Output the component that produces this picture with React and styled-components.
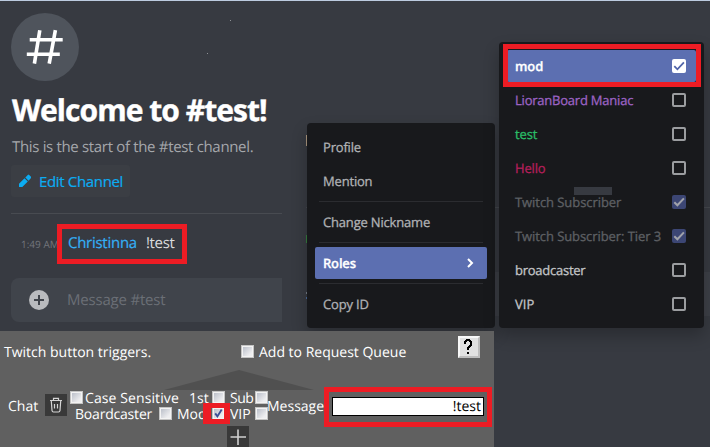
import React from 'react';
import styled, { createGlobalStyle } from 'styled-components';

const Global = createGlobalStyle`
  * { box-sizing: border-box; }
  body { margin: 0; background: #373a41; font-family: "Open Sans", "Noto Sans", sans-serif; text-rendering: geometricPrecision; }
`;

const Screen = styled.main`
  position: relative;
  width: 710px;
  height: 447px;
  overflow: hidden;
  background: #373a41;
  border-top: 1px solid #bccbe0;
  white-space: nowrap;
`;

const Highlight = styled.span`
  position: absolute;
  left: ${p => p.$x}px;
  top: ${p => p.$y}px;
  width: ${p => p.$w}px;
  height: ${p => p.$h}px;
  border-style: solid;
  border-color: #ed1c24;
  border-width: ${p => p.$border || '5px'};
  z-index: 5;
  pointer-events: none;
`;

/* ---------- channel ---------- */
const Channel = styled.section`
  display: flex;
  flex-direction: column;
  align-items: flex-start;
  width: 282px;
  height: 330px;
  padding: 12px 0 0 11px;
`;

const HashBadge = styled.div`
  display: flex;
  width: 68px;
  height: 68px;
  border-radius: 50%;
  background: #4f545c;
`;

const Title = styled.h1`
  margin: 9px 0 0 1px;
  font-size: 30px;
  line-height: 40px;
  font-weight: 700;
  letter-spacing: -0.95px;
  color: #fff;
  -webkit-text-stroke: 0.4px #fff;
`;

const Subtitle = styled.p`
  margin: 6px 0 0 1px;
  font-size: 15px;
  line-height: 22px;
  letter-spacing: -0.33px;
  color: #a5a7ab;
`;

const EditButton = styled.button`
  display: flex;
  align-items: center;
  gap: 8px;
  width: 119px;
  height: 32px;
  margin-top: 7px;
  padding: 0 0 1px 8px;
  border: 0;
  border-radius: 3px;
  background: #3b3e44;
  color: #0cacf2;
  font: 500 15px/30px "Open Sans", sans-serif;
  letter-spacing: -0.34px;
  -webkit-text-stroke: 0.2px #0cacf2;
`;

const Divider = styled.hr`
  width: 271px;
  height: 1px;
  margin: 16px 0 0;
  border: 0;
  background: #484b51;
`;

const MessageLine = styled.div`
  display: flex;
  align-items: baseline;
  height: 40px;
  margin-top: 10px;
  padding-left: 10px;
  line-height: 38px;
`;

const Time = styled.time`
  width: 47px;
  font-size: 10px;
  color: #72757b;
`;

const Author = styled.span`
  width: 78px;
  font-size: 15px;
  font-weight: 500;
  letter-spacing: -0.27px;
  color: #34aff5;
  -webkit-text-stroke: 0.2px #34aff5;
`;

const MessageText = styled.span`
  font-size: 15px;
  letter-spacing: -0.35px;
  color: #dcddde;
`;

const Composer = styled.div`
  display: flex;
  align-items: center;
  gap: 18px;
  width: 271px;
  height: 44px;
  margin-top: 14px;
  padding-left: 18px;
  border-radius: 8px 0 0 8px;
  background: #40444b;
  color: #6b6f76;
  font-size: 15px;
  line-height: 42px;
  letter-spacing: -0.2px;
`;

/* Pieces of the window that stay visible around the menus. */
const BackDivider = styled.span`
  position: absolute;
  left: 306px;
  top: 206px;
  width: 404px;
  height: 1px;
  background: #44474d;
`;
const BackComposer = styled.span`
  position: absolute;
  left: 490px;
  top: 271px;
  width: 220px;
  height: 44px;
  background: #3d4047;
`;
const Sliver = styled.span`
  position: absolute;
  left: 306px;
  top: ${p => p.$y}px;
  width: 1px;
  height: ${p => p.$h}px;
  background: ${p => p.$color};
`;
const Speck = styled.span`
  position: absolute;
  left: ${p => p.$x}px;
  top: ${p => p.$y}px;
  width: 1px;
  height: 1px;
  background: #8e9195;
`;

/* ---------- menus ---------- */
const Menu = styled.nav`
  position: absolute;
  left: ${p => p.$x}px;
  top: ${p => p.$y}px;
  width: ${p => p.$w}px;
  height: ${p => p.$h}px;
  padding: 8px;
  display: flex;
  flex-direction: column;
  gap: 2px;
  border-radius: 4px;
  background: #18191c;
  box-shadow: 0 8px 16px rgba(0, 0, 0, 0.24);
`;

const MenuItem = styled.div`
  display: flex;
  align-items: center;
  justify-content: space-between;
  flex: none;
  height: 32px;
  padding: 0 ${p => (p.$role ? 10 : 8)}px 0 8px;
  border-radius: 2px;
  background: ${p => (p.$active ? '#5c6fb1' : 'transparent')};
  color: ${p => p.$color || '#b0b2b5'};
  font-size: 13px;
  line-height: 32px;
  font-weight: ${p => (p.$active ? 600 : 500)};
  letter-spacing: ${p => p.$ls || '-0.18px'};
  -webkit-text-stroke: 0.3px currentColor;
`;

const MenuRule = styled.hr`
  flex: none;
  width: 164px;
  height: 1px;
  margin: 2px 4px;
  border: 0;
  background: #2b2c30;
`;

const Patch = styled.span`
  position: absolute;
  left: 75px;
  top: 145px;
  width: 38px;
  height: 8px;
  background: #373a41;
`;

const RoleBox = styled.span`
  display: flex;
  width: 14px;
  height: 14px;
  border-radius: 2px;
  border: ${p => (p.$state ? '0' : '2px solid #9b9da0')};
  background: ${p => (p.$state === 'on' ? '#fff' : p.$state === 'locked' ? '#3c4674' : 'transparent')};
  color: ${p => (p.$state === 'on' ? '#5165aa' : '#a1a3ab')};
`;

/* ---------- trigger panel ---------- */
const Panel = styled.section`
  position: relative;
  width: 494px;
  height: 116px;
  background: #606060;
  color: #fff;
  font-size: 14px;
  line-height: 16px;
`;

const PanelHeader = styled.div`
  display: flex;
  align-items: flex-start;
  height: 39px;
  padding: 5px 14px 0 4px;
`;

const HeaderLabel = styled.span`
  width: ${p => p.$w}px;
  padding-top: 9px;
`;

const QueueCheck = styled.div`
  width: 18px;
  padding-top: 9px;
`;

const HelpButton = styled.button`
  display: flex;
  width: 22px;
  height: 22px;
  margin-left: auto;
  padding: 0;
  border: 2px solid;
  border-color: #f8f8f8 #bdbdbd #bdbdbd #f8f8f8;
  background: #e1e1e1;
`;

const Pointer = styled.svg`
  display: block;
  width: 150px;
  height: 21px;
  margin-left: 164px;
`;

const TriggerRow = styled.div`
  display: flex;
  align-items: flex-start;
  height: 35px;
  padding-left: 8px;
`;

const RowLabel = styled.span`
  width: ${p => p.$w}px;
  margin-left: ${p => p.$ml || 0}px;
  padding-top: 8px;
`;

const IconButton = styled.button`
  display: flex;
  flex: none;
  width: 22px;
  height: 22px;
  margin: ${p => p.$m};
  padding: 0;
  border: 0;
  background: #393939;
`;

const Options = styled.div`
  display: grid;
  grid-template-rows: 16px 16px;
  width: 200px;
`;

const OptionRow = styled.div`
  display: flex;
  align-items: flex-start;
  padding-left: ${p => p.$indent || 0}px;
`;

const OptionLabel = styled.span`
  width: ${p => p.$w}px;
  padding-left: ${p => p.$pl || 0}px;
  line-height: 16px;
  letter-spacing: ${p => p.$ls || 0}px;
`;

const Check = styled.span`
  display: flex;
  flex: none;
  width: 13px;
  height: 13px;
  border: 1px solid #c4c4c4;
  box-shadow: inset 0 0 0 1px #f3f3f3;
  background: linear-gradient(135deg, #b4b9c4, #eeeef0 75%);
  color: #3b4f96;
`;

const TestInput = styled.div`
  width: 152px;
  height: 19px;
  margin: 6px 0 0 8px;
  padding-right: 2px;
  border: 1px solid #000;
  background: #fff;
  color: #000;
  text-align: right;
  line-height: 18px;
`;

const Tick = ({ w = 2 }) => (
  <svg width="14" height="14" viewBox="0 0 14 14" fill="none" stroke="currentColor" strokeWidth={w}>
    <path d="M2.3 7.2 5.4 10.3 11.9 3.4" />
  </svg>
);

const SmallTick = () => (
  <svg width="11" height="11" viewBox="0 0 11 11" fill="none" stroke="currentColor" strokeWidth="1.9">
    <path d="M2.2 5.4 4.4 8.4 8.7 1.6" />
  </svg>
);

const roles = [
  ['mod', '#fff', 'on', '-0.1px'],
  ['LioranBoard Maniac', '#9c63c4', null, '-0.22px'],
  ['test', '#2abd67', null, '-0.1px'],
  ['Hello', '#b51f5a', null, '-0.15px'],
  ['Twitch Subscriber', '#5e6064', 'locked', '-0.06px'],
  ['Twitch Subscriber: Tier 3', '#5e6064', 'locked', '-0.08px'],
  ['broadcaster', '#c2c4c6', null, '-0.25px'],
  ['VIP', '#c2c4c6', null, '0px'],
];

export default function App() {
  return (
    <Screen>
      <Global />
      <BackDivider />
      <BackComposer />
      <Sliver $y={134} $h={11} $color="#a9957e" />
      <Sliver $y={234} $h={8} $color="#347b3e" />
      <Sliver $y={291} $h={2} $color="#727983" />
      <Sliver $y={296} $h={2} $color="#4a6a9a" />
      <Speck $x={230} $y={19} />
      <Speck $x={207} $y={52} />

      <Channel>
        <HashBadge>
          <svg width="68" height="68" fill="none" stroke="#fff" strokeWidth="3.6">
            <path d="M28.8 17.2 23.4 50.6M44.4 17.2 38.2 50.6M18.7 26.8H51.7M15.8 41.3H48.8" />
          </svg>
        </HashBadge>
        <Title>Welcome to #test!</Title>
        <Subtitle>This is the start of the #test channel.</Subtitle>
        <EditButton>
          <svg width="12" height="13" viewBox="0 0 12 13" fill="currentColor">
            <path d="M0 13V9.7L5.5 4.2 8.8 7.5 3.3 13ZM6.3 3.4 8.8.9Q9.5.2 10.2.9L12 2.7Q12.5 3.4 12 4.1L9.6 6.7Z" />
          </svg>
          Edit Channel
        </EditButton>
        <Divider />
        <MessageLine>
          <Time>1:49 AM</Time>
          <Author>Christinna</Author>
          <MessageText>!test</MessageText>
        </MessageLine>
        <Composer>
          <svg width="20" height="20" viewBox="0 0 20 20">
            <circle cx="10" cy="10" r="10" fill="#b9bbbe" />
            <path d="M10 5v10M5 10h10" stroke="#40444b" strokeWidth="2" />
          </svg>
          Message #test
        </Composer>
      </Channel>
      <Highlight $x={57} $y={223} $w={130} $h={40} />

      <Menu $x={307} $y={122} $w={188} $h={205}>
        <MenuItem>Profile</MenuItem>
        <MenuItem>Mention</MenuItem>
        <MenuRule />
        <MenuItem>Change Nickname</MenuItem>
        <MenuRule />
        <MenuItem $active $color="#fff">
          Roles
          <svg width="18" height="18" viewBox="0 0 18 18" fill="none" stroke="#fff" strokeWidth="2">
            <path d="m7 5 4 4-4 4" />
          </svg>
        </MenuItem>
        <MenuRule />
        <MenuItem>Copy ID</MenuItem>
      </Menu>

      <Menu $x={499} $y={41} $w={205} $h={286}>
        {roles.map(([name, color, state, ls]) => (
          <MenuItem key={name} $role $active={state === 'on'} $color={color} $ls={ls}>
            {name}
            <RoleBox $state={state}>{state && <Tick w={state === 'on' ? 1.8 : 2} />}</RoleBox>
          </MenuItem>
        ))}
        <Patch />
      </Menu>
      <Highlight $x={503} $y={43} $w={198} $h={43} />

      <Panel>
        <PanelHeader>
          <HeaderLabel $w={237}>Twitch button triggers.</HeaderLabel>
          <QueueCheck><Check /></QueueCheck>
          <HeaderLabel $w={160}>Add to Request Queue</HeaderLabel>
          <HelpButton aria-label="Help">
            <svg width="18" height="18" viewBox="0 0 18 18" fill="#000">
              <path d="M5 2H6V1H10V2H11V3H12V8H11V9H10V10H9V12H7V9H8V8H9V7H10V4H9V3H7V4H6V6H4V3H5ZM7 14H9V16H7Z" />
            </svg>
          </HelpButton>
        </PanelHeader>
        <Pointer viewBox="0 0 150 21"><path d="M75 0 150 20H0Z" fill="#505050" /></Pointer>
        <TriggerRow>
          <RowLabel $w={37}>Chat</RowLabel>
          <IconButton $m="3px 3px 0 0" aria-label="Delete">
            <svg width="22" height="22" fill="none" stroke="#d5d5d5" strokeWidth="1.2">
              <path d="M5 6.5H17M8.5 6V4.3H13.5V6M6.3 7 7 16.5Q7.2 18 8.5 18H13.5Q14.8 18 15 16.5L15.7 7M9.5 10V14.5M12.5 10V14.5" />
            </svg>
          </IconButton>
          <Options>
            <OptionRow>
              <Check />
              <OptionLabel $w={106} $pl={2} $ls={0.1}>Case Sensitive</OptionLabel>
              <OptionLabel $w={23}>1st</OptionLabel>
              <Check />
              <OptionLabel $w={30} $pl={5} $ls={-0.5}>Sub</OptionLabel>
              <Check />
            </OptionRow>
            <OptionRow $indent={5}>
              <OptionLabel $w={84} $ls={-0.2}>Boardcaster</OptionLabel>
              <Check />
              <OptionLabel $w={40} $pl={5}>Mod</OptionLabel>
              <Check><SmallTick /></Check>
              <OptionLabel $w={30} $pl={5}>VIP</OptionLabel>
              <Check />
            </OptionRow>
          </Options>
          <RowLabel $w={57} $ml={-3}>Message</RowLabel>
          <TestInput>!test</TestInput>
        </TriggerRow>
        <IconButton $m="0 0 0 227px" aria-label="Add">
          <svg width="22" height="22" stroke="#d0d0d0" strokeWidth="1.6"><path d="M11 3.5V19M3.5 11H19" /></svg>
        </IconButton>
        <Highlight $x={203} $y={72} $w={27} $h={21} $border="5px 6px 5px 8px" />
        <Highlight $x={324} $y={56} $w={168} $h={40} />
      </Panel>
    </Screen>
  );
}
